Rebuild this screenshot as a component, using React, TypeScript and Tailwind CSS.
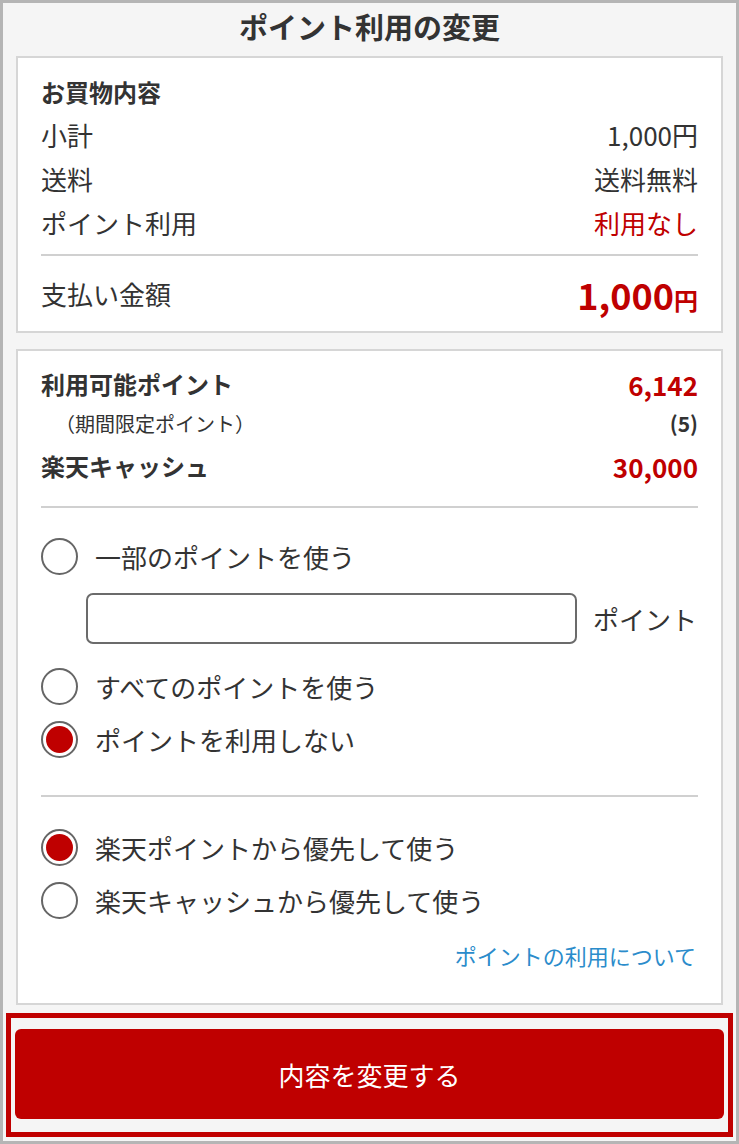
// ポイント利用の変更 — 購入内容とポイント利用設定のシート

import { useState } from 'react';

const FONT = "font-['Hiragino_Sans','Noto_Sans_CJK_JP',sans-serif]";

function Radio({ checked, onClick, label }: { checked: boolean; onClick: () => void; label: string }) {
  return (
    <button onClick={onClick} className="h-[53px] flex items-center gap-[17px] text-left">
      <span className="w-[37px] h-[37px] rounded-full border-2 border-[#666] bg-white flex items-center justify-center shrink-0">
        {checked && <span className="w-[27px] h-[27px] rounded-full bg-[#bf0000]" />}
      </span>
      <span className="text-[26px] leading-none text-[#333]">{label}</span>
    </button>
  );
}

export default function App() {
  const [usage, setUsage] = useState<'part' | 'all' | 'none'>('none');
  const [priority, setPriority] = useState<'point' | 'cash'>('point');

  return (
    <div className={`${FONT} w-[739px] h-[1144px] border-[3px] border-[#b5b5b5] bg-[#f5f5f5] text-[#333] flex flex-col`}>
      {/* タイトル */}
      <h1 className="h-[53px] flex items-center justify-center text-[29px] font-bold pb-[6px]">ポイント利用の変更</h1>

      {/* お買物内容 */}
      <section className="mx-[13px] bg-white border-2 border-[#d6d6d6] px-[23px] pt-[14px]">
        <h2 className="text-[24px] font-bold leading-[40px]">お買物内容</h2>
        <div className="h-[44px] flex items-center justify-between text-[26px]">
          <span>小計</span>
          <span>1,000円</span>
        </div>
        <div className="h-[44px] flex items-center justify-between text-[26px]">
          <span>送料</span>
          <span>送料無料</span>
        </div>
        <div className="h-[44px] flex items-center justify-between text-[26px]">
          <span>ポイント利用</span>
          <span className="text-[#bf0000]">利用なし</span>
        </div>
        <div className="mt-[10px] border-t-2 border-[#d0d0d0]" />
        <div className="h-[75px] flex items-center justify-between">
          <span className="text-[26px]">支払い金額</span>
          <span className="text-[#bf0000] font-bold flex items-baseline">
            <span className="text-[36px]">1,000</span>
            <span className="text-[24px]">円</span>
          </span>
        </div>
      </section>

      {/* ポイント利用設定 */}
      <section className="mx-[13px] mt-[16px] bg-white border-2 border-[#d6d6d6] px-[23px] pt-[15px] pb-[33px]">
        <div className="h-[36px] flex items-center justify-between">
          <span className="text-[24px] font-bold">利用可能ポイント</span>
          <span className="text-[26px] font-semibold text-[#bf0000]">6,142</span>
        </div>
        <div className="h-[44px] flex items-center justify-between">
          <span className="text-[20px] ml-[14px]">（期間限定ポイント）</span>
          <span className="text-[21px] font-semibold">(5)</span>
        </div>
        <div className="h-[40px] flex items-center justify-between">
          <span className="text-[24px] font-bold">楽天キャッシュ</span>
          <span className="text-[26px] font-semibold text-[#bf0000]">30,000</span>
        </div>
        <div className="mt-[20px] border-t-2 border-[#d0d0d0]" />

        <div className="pt-[22px] flex flex-col">
          <Radio checked={usage === 'part'} onClick={() => setUsage('part')} label="一部のポイントを使う" />
          <div className="mt-[10px] ml-[45px] flex items-center gap-[16px]">
            <input
              type="text"
              className="w-[491px] h-[51px] rounded-[7px] border-2 border-[#6b6b6b] px-3 text-[24px] outline-none"
            />
            <span className="text-[26px]">ポイント</span>
          </div>
          <div className="mt-[16px]" />
          <Radio checked={usage === 'all'} onClick={() => setUsage('all')} label="すべてのポイントを使う" />
          <Radio checked={usage === 'none'} onClick={() => setUsage('none')} label="ポイントを利用しない" />
        </div>

        <div className="mt-[29px] border-t-2 border-[#d0d0d0]" />

        <div className="pt-[24px] flex flex-col">
          <Radio checked={priority === 'point'} onClick={() => setPriority('point')} label="楽天ポイントから優先して使う" />
          <Radio checked={priority === 'cash'} onClick={() => setPriority('cash')} label="楽天キャッシュから優先して使う" />
        </div>

        <div className="mt-[13px] h-[30px] flex items-center justify-end">
          <a href="#" className="text-[22px] text-[#2b8ccb] mr-[2px]">ポイントの利用について</a>
        </div>
      </section>

      {/* 変更ボタン */}
      <div className="mt-[8px] ml-[3px] mr-[3px] border-[5px] border-[#c00000] px-[4px] pt-[11px] pb-[13px]">
        <button className="w-full h-[90px] rounded-[6px] bg-[#bf0000] text-white text-[26px]">内容を変更する</button>
      </div>
    </div>
  );
}
